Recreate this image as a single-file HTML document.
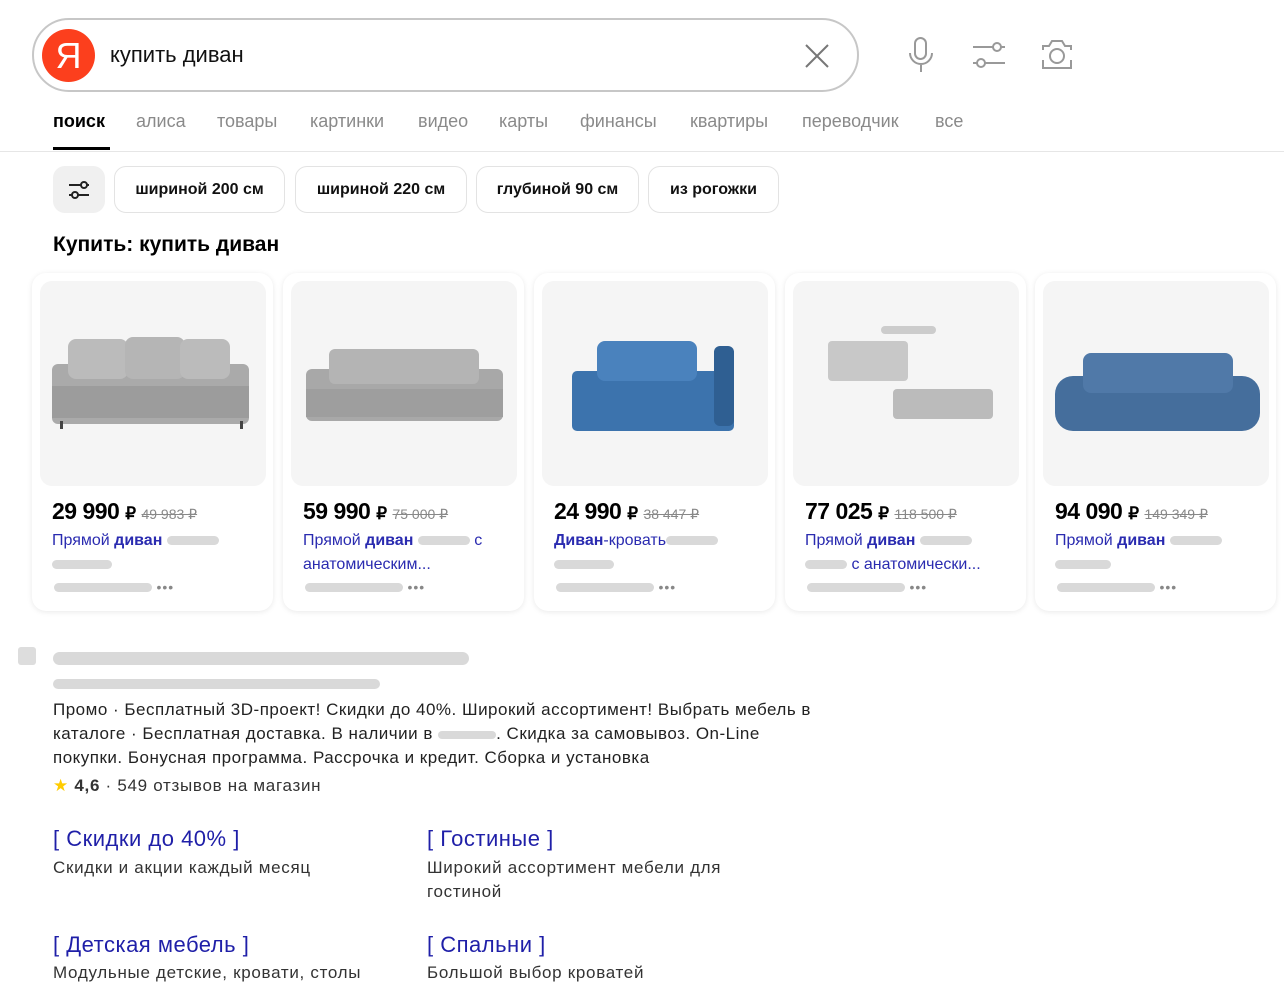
<!DOCTYPE html><html><head><meta charset="utf-8"><style>
*{margin:0;padding:0;box-sizing:border-box}
body{width:1284px;height:1000px;overflow:hidden;background:#fff;font-family:"Liberation Sans",sans-serif;color:#000;position:relative}
.a{position:absolute}
.search{left:32px;top:18px;width:827px;height:74px;border:2px solid #c7c7c7;border-radius:37px}
.logo{left:42px;top:29px;width:53px;height:53px;border-radius:50%;background:#fc3f1d;color:#fff;font-size:36px;text-align:center;line-height:53px}
.tabs span{position:absolute;top:111px;font-size:18px;color:#8a8a8a}
.chip{position:absolute;top:166px;height:47px;border:1px solid #e3e3e3;border-radius:12px;font-size:16px;line-height:45px;text-align:center;font-weight:bold;color:#111}
.card{position:absolute;top:273px;width:241px;height:338px;background:#fff;border-radius:14px;box-shadow:0 1px 6px rgba(0,0,0,.09)}
.img{position:absolute;left:8px;top:8px;width:226px;height:205px;background:#f5f5f5;border-radius:12px;overflow:hidden}
.pr{position:absolute;left:20px;top:225px;font-size:23px;font-weight:bold;letter-spacing:-.5px}
.pr i{font-style:normal;font-size:17px}
.pr s{font-size:14px;color:#888;font-weight:normal;letter-spacing:0}
.t{position:absolute;left:20px;top:256px;font-size:16px;color:#2a2bb0;line-height:24px;width:210px}
.bar{display:inline-block;height:9px;border-radius:5px;background:#d9d9d9;vertical-align:middle}
.dots{color:#888;font-size:14px;letter-spacing:1px}
.lk{font-size:22px;color:#1f1fa8;letter-spacing:.5px}
.ds{font-size:17px;color:#333;line-height:24px;letter-spacing:.7px}
</style></head><body>
<div class="a search"></div>
<div class="a logo">Я</div>
<div class="a" style="left:110px;top:42px;font-size:22px;color:#111">купить диван</div>
<svg class="a" style="left:804px;top:43px" width="26" height="26"><path d="M2 2L24 24M24 2L2 24" stroke="#777" stroke-width="2"/></svg>
<svg class="a" style="left:905px;top:36px" width="32" height="38" fill="none" stroke="#999" stroke-width="2"><rect x="10" y="2" width="11" height="21" rx="5.5"/><path d="M5 17a11 11 0 0 0 22 0M16 28v8"/></svg>
<svg class="a" style="left:971px;top:38px" width="36" height="34" fill="none" stroke="#999" stroke-width="2"><path d="M2 9h20M30 9h4M2 25h4M14 25h20"/><circle cx="26" cy="9" r="4"/><circle cx="10" cy="25" r="4"/></svg>
<svg class="a" style="left:1039px;top:38px" width="36" height="34" fill="none" stroke="#999" stroke-width="2"><path d="M4 12v-4h6l3-5h10l3 5h6v4M4 22v8h28v-8"/><circle cx="18" cy="18" r="7"/></svg>
<div class="tabs">
<span style="left:53px;color:#000;font-weight:bold">поиск</span>
<span style="left:136px">алиса</span><span style="left:217px">товары</span><span style="left:310px">картинки</span><span style="left:418px">видео</span><span style="left:499px">карты</span><span style="left:580px">финансы</span><span style="left:690px">квартиры</span><span style="left:802px">переводчик</span><span style="left:935px">все</span>
</div>
<div class="a" style="left:53px;top:147px;width:57px;height:3px;background:#000"></div>
<div class="a" style="left:0;top:151px;width:1284px;height:1px;background:#e6e6e6"></div>
<div class="a" style="left:53px;top:166px;width:52px;height:47px;border-radius:12px;background:#f0f0f0"></div>
<svg class="a" style="left:67px;top:179px" width="24" height="22" fill="none" stroke="#222" stroke-width="2"><path d="M2 6h12M20 6h2M2 16h3M11 16h11"/><circle cx="17" cy="6" r="3"/><circle cx="8" cy="16" r="3"/></svg>
<div class="chip" style="left:114px;width:171px">шириной 200 см</div>
<div class="chip" style="left:295px;width:172px">шириной 220 см</div>
<div class="chip" style="left:476px;width:163px">глубиной 90 см</div>
<div class="chip" style="left:648px;width:131px">из рогожки</div>
<div class="a" style="left:53px;top:233px;font-size:21px;font-weight:bold">Купить: купить диван</div>

<div class="card" style="left:32px"><div class="img"><svg width="226" height="205"><rect x="12" y="83" width="197" height="60" rx="6" fill="#aaa"/><rect x="28" y="58" width="60" height="40" rx="8" fill="#bbb"/><rect x="85" y="56" width="60" height="42" rx="8" fill="#b5b5b5"/><rect x="140" y="58" width="50" height="40" rx="8" fill="#bbb"/><rect x="12" y="105" width="197" height="32" fill="#9c9c9c"/><rect x="20" y="140" width="3" height="8" fill="#444"/><rect x="200" y="140" width="3" height="8" fill="#444"/></svg></div>
<div class="pr">29 990 <i>₽</i> <s>49 983 ₽</s></div><div class="t">Прямой <b>диван</b> <span class="bar" style="width:52px"></span><br><span class="bar" style="width:60px"></span></div>
<div class="a" style="left:22px;top:306px"><span class="bar" style="width:98px"></span> <span class="dots">•••</span></div></div>

<div class="card" style="left:283px"><div class="img"><svg width="226" height="205"><rect x="15" y="88" width="197" height="52" rx="6" fill="#a8a8a8"/><rect x="38" y="68" width="150" height="35" rx="6" fill="#b4b4b4"/><rect x="15" y="108" width="197" height="28" fill="#9e9e9e"/></svg></div>
<div class="pr">59 990 <i>₽</i> <s>75 000 ₽</s></div><div class="t">Прямой <b>диван</b> <span class="bar" style="width:52px"></span> с анатомическим...</div>
<div class="a" style="left:22px;top:306px"><span class="bar" style="width:98px"></span> <span class="dots">•••</span></div></div>

<div class="card" style="left:534px"><div class="img"><svg width="226" height="205"><rect x="30" y="90" width="162" height="60" rx="5" fill="#3c73ad"/><rect x="55" y="60" width="100" height="40" rx="8" fill="#4a82bd"/><rect x="172" y="65" width="20" height="80" rx="6" fill="#2f5f92"/></svg></div>
<div class="pr">24 990 <i>₽</i> <s>38 447 ₽</s></div><div class="t"><b>Диван</b>-кровать<span class="bar" style="width:52px"></span><br><span class="bar" style="width:60px"></span></div>
<div class="a" style="left:22px;top:306px"><span class="bar" style="width:98px"></span> <span class="dots">•••</span></div></div>

<div class="card" style="left:785px"><div class="img"><svg width="226" height="205"><rect x="88" y="45" width="55" height="8" rx="4" fill="#ccc"/><rect x="35" y="60" width="80" height="40" rx="4" fill="#c8c8c8"/><rect x="100" y="108" width="100" height="30" rx="4" fill="#bbb"/></svg></div>
<div class="pr">77 025 <i>₽</i> <s>118 500 ₽</s></div><div class="t">Прямой <b>диван</b> <span class="bar" style="width:52px"></span><br><span class="bar" style="width:42px"></span> с анатомически...</div>
<div class="a" style="left:22px;top:306px"><span class="bar" style="width:98px"></span> <span class="dots">•••</span></div></div>

<div class="card" style="left:1035px"><div class="img"><svg width="226" height="205"><rect x="12" y="95" width="205" height="55" rx="18" fill="#456e9c"/><rect x="40" y="72" width="150" height="40" rx="8" fill="#5079a8"/></svg></div>
<div class="pr">94 090 <i>₽</i> <s>149 349 ₽</s></div><div class="t">Прямой <b>диван</b> <span class="bar" style="width:52px"></span><br><span class="bar" style="width:56px"></span></div>
<div class="a" style="left:22px;top:306px"><span class="bar" style="width:98px"></span> <span class="dots">•••</span></div></div>

<div class="a" style="left:18px;top:647px;width:18px;height:18px;background:#ddd;border-radius:3px"></div>
<div class="a bar" style="left:53px;top:652px;width:416px;height:13px;border-radius:7px"></div>
<div class="a bar" style="left:53px;top:679px;width:327px;height:10px"></div>
<div class="a ds" style="left:53px;top:698px;width:900px;color:#222;white-space:nowrap;letter-spacing:.5px">Промо · Бесплатный 3D-проект! Скидки до 40%. Широкий ассортимент! Выбрать мебель в<br>каталоге · Бесплатная доставка. В наличии в <span class="bar" style="width:58px;height:8px"></span>. Скидка за самовывоз. On-Line<br>покупки. Бонусная программа. Рассрочка и кредит. Сборка и установка</div>
<div class="a ds" style="left:53px;top:774px"><span style="color:#fc0">★</span> <b>4,6</b> · 549 отзывов на магазин</div>
<div class="a lk" style="left:53px;top:826px">[ Скидки до 40% ]</div>
<div class="a ds" style="left:53px;top:856px">Скидки и акции каждый месяц</div>
<div class="a lk" style="left:427px;top:826px">[ Гостиные ]</div>
<div class="a ds" style="left:427px;top:856px;width:360px">Широкий ассортимент мебели для<br>гостиной</div>
<div class="a lk" style="left:53px;top:932px">[ Детская мебель ]</div>
<div class="a ds" style="left:53px;top:961px">Модульные детские, кровати, столы</div>
<div class="a lk" style="left:427px;top:932px">[ Спальни ]</div>
<div class="a ds" style="left:427px;top:961px">Большой выбор кроватей</div>
</body></html>
